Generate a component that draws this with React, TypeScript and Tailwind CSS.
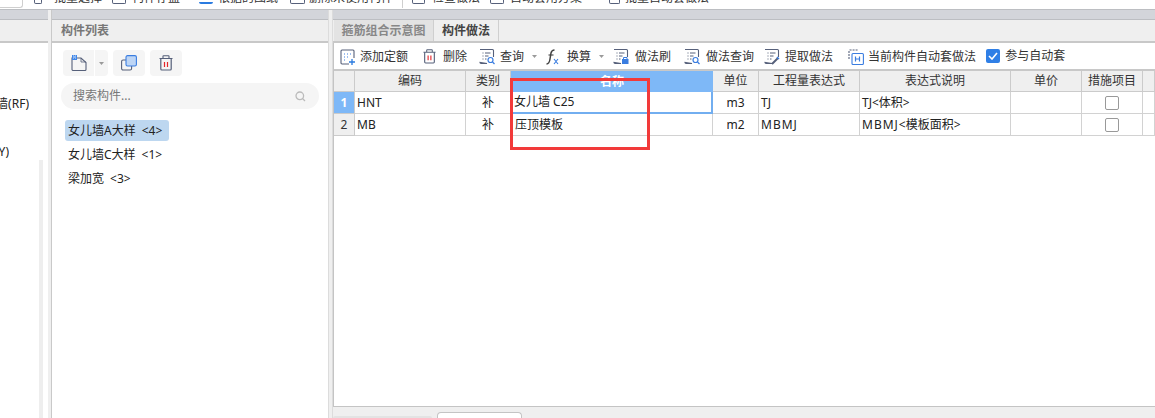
import React from "react";

const font = { fontFamily: '"Noto Sans", "Noto Sans CJK SC", sans-serif' };

const Doc = ({ children }: { children?: React.ReactNode }) => (
  <svg width="16" height="17" viewBox="0 0 16 17" fill="none" className="shrink-0">
    <path d="M1 1.500h12.500a1 1 0 0 1 1 1V9M8 15.500H2a1 1 0 0 1-1-1z" stroke="#56607a" strokeWidth="1.100" />
    <path d="M3.500 5h1M6 5h5.500M3.500 8h1M6 8h3.500M3.500 11h1M6 11h1.500" stroke="#56607a" strokeWidth="1" />
    {children}
  </svg>
);

const Trash = ({ size = 14 }: { size?: number }) => (
  <svg width={size} height={size + 2} viewBox="0 0 14 16" fill="none" className="shrink-0">
    <path d="M0.500 3.500h13M4 3.500V1.200a.5.5 0 0 1 .5-.5h5a.5.5 0 0 1 .5.5v2.300" stroke="#56607a" strokeWidth="1.100" />
    <path d="M1.800 3.500v10.500a1 1 0 0 0 1 1h8.400a1 1 0 0 0 1-1V3.500" stroke="#56607a" strokeWidth="1.200" />
    <path d="M5.500 7v5M8.500 7v5" stroke="#e5252a" strokeWidth="1.200" />
  </svg>
);

const Caret = () => (
  <svg width="5" height="3" viewBox="0 0 5 3" className="shrink-0"><path d="M0 0h5L2.500 3z" fill="#9a9a9a" /></svg>
);

const Tool = ({ icon, label, caret, className, gap = "ml-[5px]" }: { icon: React.ReactNode; label: string; caret?: boolean; className: string; gap?: string }) => (
  <div className={`flex items-center ${className}`}>
    {icon}
    <span className={`${gap} whitespace-nowrap`}>{label}</span>
    {caret && <span className="ml-[8px] flex"><Caret /></span>}
  </div>
);

const cols = "grid grid-cols-[21px_111px_45px_202px_46px_101px_151px_71px_61px_1fr]";
const hCell = "flex items-center justify-center border-r border-b border-[#cbcbcb] bg-[#efefef] text-[#333]";
const cell = "flex items-center border-r border-b border-[#d2d2d2] bg-white text-[#222]";

const Box = () => <span className="h-[14px] w-[14px] rounded-[2px] border border-[#999] bg-white" />;

const Band = () => <div className="h-[10px] shrink-0 border-b border-[#bcbec2] bg-[#d3d5da]" />;

const TopItem = ({ label, icon, className, gap }: { label: string; icon: React.ReactNode; className: string; gap: string }) => (
  <div className={`flex h-[4px] items-end whitespace-nowrap ${className}`}>
    {icon}
    <span className={`-mb-[2px] leading-[16px] ${gap}`}>{label}</span>
  </div>
);

const TopIcon = ({ w, bar }: { w: string; bar?: boolean }) => (
  <span className={`${w} h-[4px] shrink-0 rounded-b-[2px] ${bar ? "border-b-2 border-b-[#2a7be0]" : "border-x border-b border-[#56607a]"}`} />
);

export default function App() {
  return (
    <div style={font} className="flex h-[418px] w-[1155px] flex-col overflow-hidden bg-white text-[12px] text-[#222]">
      {/* clipped top toolbar */}
      <div className="flex h-[9px] shrink-0 overflow-hidden text-[#333]">
        <div className="h-[8px] w-[23px] shrink-0 rounded-br-[3px] border-r border-b border-[#cfcfcf]" />
        <TopItem className="ml-[11px]" gap="ml-[12px]" icon={<TopIcon w="w-[8px]" />} label="批量选择" />
        <TopItem className="ml-[10px]" gap="ml-[6px]" icon={<TopIcon w="w-[14px]" />} label="构件存盘" />
        <TopItem className="ml-[19px]" gap="ml-[5px]" icon={<TopIcon w="w-[14px]" bar />} label="根据的图纸" />
        <TopItem className="ml-[12px]" gap="ml-[4px]" icon={<TopIcon w="w-[15px]" />} label="删除未使用构件" />
        <div className="ml-[9px] h-[8px] w-px shrink-0 bg-[#cfcfcf]" />
        <TopItem className="ml-[9px]" gap="ml-[7px]" icon={<TopIcon w="w-[13px]" />} label="检查做法" />
        <TopItem className="ml-[10px]" gap="ml-[6px]" icon={<TopIcon w="w-[14px]" />} label="自动套用方案" />
        <TopItem className="ml-[27px]" gap="ml-[5px]" icon={<TopIcon w="w-[11px]" />} label="批量自动套做法" />
      </div>

      <div className="flex min-h-0 flex-1 border-t border-[#bcbec2]">
        {/* left column */}
        <div className="flex w-[48px] shrink-0 flex-col">
          <Band />
          <div className="h-[23px] shrink-0 border-b-2 border-[#c8c8c8] bg-[#efefef]" />
          <div className="flex min-h-0 flex-1">
            <div className="flex w-[39px] shrink-0 flex-col text-[12px]">
              <div className="mt-[52px] flex w-[29px] justify-end overflow-hidden whitespace-nowrap leading-[18px]">女儿墙(RF)</div>
              <div className="mt-[30px] flex w-[9px] justify-end overflow-hidden whitespace-nowrap leading-[18px]">(Y)</div>
            </div>
            <div className="mt-[117px] w-[4px] bg-[#eeeeee]" />
          </div>
        </div>
        <div className="w-[4px] shrink-0 border-r border-[#c9c9c9] bg-[#efefef]" />

        {/* component list */}
        <div className="flex w-[276px] shrink-0 flex-col">
          <Band />
          <div className="flex h-[23px] shrink-0 items-center border-b-2 border-[#c8c8c8] bg-[#efefef] pl-[9px] font-bold text-[#777]">构件列表</div>
          <div className="flex gap-[5px] pl-[11px] pt-[7px]">
            <div className="flex h-[26px] w-[45px] items-center rounded-[4px] bg-[#f5f5f5]">
              <div className="flex h-full w-[32px] items-center justify-center border-r border-white">
                <svg width="16" height="16" viewBox="0 0 16 16" fill="none">
                  <path d="M1 3h9l5 4.500v7a1 1 0 0 1-1 1H2a1 1 0 0 1-1-1z" stroke="#56607a" strokeWidth="1.100" />
                  <path d="M10 3v4h5" stroke="#56607a" strokeWidth="0.800" />
                  <rect x="1" y="0" width="5" height="5" fill="#3f86e8" />
                  <path d="M2 1h1M4 1h1M3 2h1M2 3h1M4 3h1" stroke="#ffffff" strokeWidth="0.800" />
                </svg>
              </div>
              <div className="flex flex-1 justify-center"><Caret /></div>
            </div>
            <div className="flex h-[26px] w-[32px] items-center justify-center rounded-[4px] bg-[#f5f5f5]">
              <svg width="16" height="16" viewBox="0 0 16 16" fill="none">
                <rect x="0.600" y="5" width="10" height="10" rx="1.500" fill="#f5f5f5" stroke="#56607a" strokeWidth="1.100" />
                <rect x="5" y="0.600" width="10.400" height="10.400" rx="1.500" fill="#bdd5f5" stroke="#3a7de0" strokeWidth="1.100" />
              </svg>
            </div>
            <div className="flex h-[26px] w-[32px] items-center justify-center rounded-[4px] bg-[#f5f5f5]"><Trash size={14} /></div>
          </div>
          <div className="ml-[9px] mt-[7px] flex h-[26px] w-[258px] items-center justify-between rounded-full bg-[#f5f5f5] pl-[12px] pr-[13px] text-[#777]">
            <span>搜索构件...</span>
            <svg width="11" height="11" viewBox="0 0 11 11" fill="none"><circle cx="4.800" cy="4.800" r="3.800" stroke="#bbbbbb" strokeWidth="1.300" /><path d="M7.500 7.500 10 10" stroke="#bbbbbb" strokeWidth="1.300" /></svg>
          </div>
          <div className="ml-[13px] mt-[11px] flex w-[104px] flex-col">
            <div className="flex h-[21px] items-center whitespace-nowrap rounded-[3px] bg-[#bdd7f0] pl-[3px]">女儿墙A大样<span className="ml-[6px]">&lt;4&gt;</span></div>
            <div className="mt-[3px] flex h-[21px] items-center whitespace-nowrap pl-[3px]">女儿墙C大样<span className="ml-[6px]">&lt;1&gt;</span></div>
            <div className="mt-[3px] flex h-[21px] items-center whitespace-nowrap pl-[3px]">梁加宽<span className="ml-[6px]">&lt;3&gt;</span></div>
          </div>
        </div>
        <div className="w-[5px] shrink-0 border-x border-[#dcdcdc] bg-[#efefef]" />

        {/* right panel */}
        <div className="relative flex min-w-0 flex-1 flex-col">
          <Band />
          <div className="flex h-[23px] shrink-0 border-b-2 border-[#c8c8c8] bg-[#efefef] pl-px">
            <div className="flex w-[100px] items-center justify-center border-r border-[#cfcfcf] bg-[#e3e3e3] font-bold text-[#888]">箍筋组合示意图</div>
            <div className="flex w-[65px] items-center justify-center border-r border-[#cfcfcf] font-bold text-[#444]">构件做法</div>
          </div>

          <div className="flex min-h-0 flex-1 flex-col border-b border-l border-[#c4c4c4]">
            <div className="relative flex h-[26px] shrink-0 items-center pt-px text-[#333]">
              <Tool className="ml-[6px]" label="添加定额" gap="ml-[4px]" icon={
                <svg width="16" height="16" viewBox="0 0 16 16" fill="none"><path d="M9 15H2a1 1 0 0 1-1-1V2a1 1 0 0 1 1-1h11a1 1 0 0 1 1 1v7" stroke="#56607a" strokeWidth="1.100" /><path d="M4 5h1M7 5h1M10 5h1M4 8h1M7 8h1M4 11h1" stroke="#3a7de0" strokeWidth="1" /><path d="M12 10v6M9 13h6" stroke="#2a7be0" strokeWidth="1.300" /></svg>
              } />
              <Tool className="ml-[15px]" label="删除" gap="ml-[7px]" icon={<Trash size={13} />} />
              <Tool className="ml-[12px]" label="查询" caret icon={<Doc><circle cx="11.500" cy="12" r="2.500" fill="#fff" stroke="#3a7de0" strokeWidth="1.200" /><path d="M13.500 14l2 2" stroke="#3a7de0" strokeWidth="1.200" /></Doc>} />
              <Tool className="ml-[9px]" label="换算" caret gap="ml-[7px]" icon={
                <svg width="14" height="16" viewBox="0 0 14 16" fill="none" className="shrink-0"><path d="M0.500 15c2.500 0 3-1.500 3.500-5l1-6C5.500 2 6.500 1 8.500 1" stroke="#444" strokeWidth="1.500" /><path d="M2.500 6h5" stroke="#444" strokeWidth="1.100" /><path d="M8 10l4 5M12 10l-4 5" stroke="#3a7de0" strokeWidth="1.100" /></svg>
              } />
              <Tool className="ml-[9px]" label="做法刷" gap="ml-[6px]" icon={<Doc><rect x="9" y="11" width="6.500" height="5" fill="#3a7de0" /><path d="M10.500 11V9.500h3.500V11" stroke="#3a7de0" /></Doc>} />
              <Tool className="ml-[13px]" label="做法查询" gap="ml-[6px]" icon={<Doc><circle cx="11.500" cy="12" r="2.500" fill="#fff" stroke="#3a7de0" strokeWidth="1.200" /><path d="M13.500 14l2 2" stroke="#3a7de0" strokeWidth="1.200" /></Doc>} />
              <Tool className="ml-[10px]" label="提取做法" icon={<Doc><path d="M8 16l6-6" stroke="#56607a" strokeWidth="2" /><path d="M13 9l2 2" stroke="#3a7de0" strokeWidth="1.500" /></Doc>} />
              <Tool className="ml-[15px]" label="当前构件自动套做法" gap="ml-[4px]" icon={
                <svg width="16" height="16" viewBox="0 0 16 16" fill="none" className="shrink-0"><path d="M1 10V2a1 1 0 0 1 1-1h8" stroke="#56607a" strokeWidth="1.100" strokeDasharray="2 1" /><rect x="4" y="4.500" width="11.400" height="11" rx="1" fill="#fff" stroke="#3a7de0" strokeWidth="1.100" /><path d="M7.500 7.500v5M11.500 7.500v5M7.500 10h4" stroke="#3a7de0" strokeWidth="1.200" /></svg>
              } />
              <div className="-mt-[2px] ml-[10px] flex items-center">
                <span className="flex h-[14px] w-[14px] items-center justify-center rounded-[2px] bg-[#2f7fe6]">
                  <svg width="10" height="8" viewBox="0 0 10 8" fill="none"><path d="M1 4l3 3 5-6" stroke="#fff" strokeWidth="1.600" /></svg>
                </span>
                <span className="ml-[5px] whitespace-nowrap">参与自动套</span>
              </div>
            </div>

            <div className="shrink-0 border-t-2 border-[#c8c8c8]">
              <div className={`${cols} h-[21px]`}>
                <div className={hCell} />
                <div className={hCell}>编码</div>
                <div className={hCell}>类别</div>
                <div className="flex items-center justify-center bg-[#7eb8f7] font-bold text-white">名称</div>
                <div className={hCell}>单位</div>
                <div className={hCell}>工程量表达式</div>
                <div className={hCell}>表达式说明</div>
                <div className={hCell}>单价</div>
                <div className={hCell}>措施项目</div>
                <div className={hCell} />
              </div>
              <div className={`${cols} h-[22px]`}>
                <div className="flex items-center justify-center border-b border-r border-[#cbcbcb] bg-[#7eb8f7] font-bold text-white">1</div>
                <div className={`${cell} pl-[2px]`}>HNT</div>
                <div className={`${cell} justify-center`}>补</div>
                <div className="flex items-center border-r-2 border-b-2 border-[#72aef0] bg-white pl-[3px] text-[#222]">女儿墙 C25</div>
                <div className={`${cell} justify-center`}>m3</div>
                <div className={`${cell} pl-[2px]`}>TJ</div>
                <div className={`${cell} pl-[2px]`}>TJ&lt;体积&gt;</div>
                <div className={cell} />
                <div className={`${cell} justify-center`}><Box /></div>
                <div className={cell} />
              </div>
              <div className={`${cols} h-[22px]`}>
                <div className="flex items-center justify-center border-b border-r border-[#cbcbcb] bg-[#efefef] text-[#333]">2</div>
                <div className={`${cell} pl-[2px]`}>MB</div>
                <div className={`${cell} justify-center`}>补</div>
                <div className={`${cell} pl-[4px]`}>压顶模板</div>
                <div className={`${cell} justify-center`}>m2</div>
                <div className={`${cell} pl-[2px] tracking-[1px]`}>MBMJ</div>
                <div className={`${cell} pl-[2px]`}><span className="tracking-[1px]">MBMJ</span>&lt;模板面积&gt;</div>
                <div className={cell} />
                <div className={`${cell} justify-center`}><Box /></div>
                <div className={cell} />
              </div>
            </div>
          </div>

          <div className="flex h-[11px] shrink-0 items-end bg-[#efefef]">
            <div className="h-[2px] w-[99px] rounded-t-[2px] bg-[#e3e3e3]" />
            <div className="ml-[5px] h-[6px] w-[85px] rounded-t-[4px] border-x border-t border-[#c4c4c4] bg-white" />
          </div>

          {/* red annotation */}
          <div className="absolute left-[177px] top-[68px] h-[72px] w-[140px] border-[3px] border-[#f23a3a]" />
        </div>
      </div>
    </div>
  );
}
